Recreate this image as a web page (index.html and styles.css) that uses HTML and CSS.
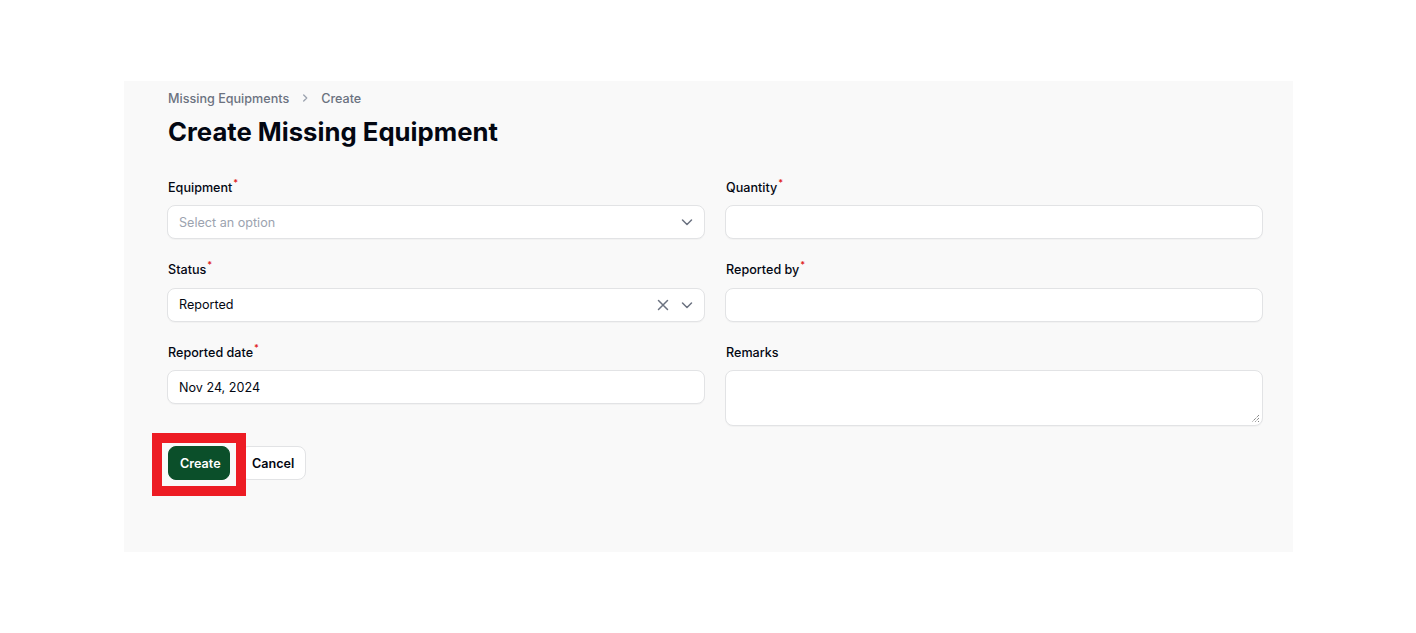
FILE: index.html
```html
<!DOCTYPE html>
<html>
<head>
<meta charset="utf-8">
<link rel="stylesheet" href="styles.css">
</head>
<body>
<div class="page">
  <div class="panel">
    <nav class="crumbs">
      <span>Missing Equipments</span>
      <svg class="sep" width="14" height="14" viewBox="0 0 16 16"><path d="M6.5 4.5 10 8l-3.5 3.5" fill="none" stroke="#9ca3af" stroke-width="1.5" stroke-linecap="round" stroke-linejoin="round"/></svg>
      <span>Create</span>
    </nav>
    <h1 class="title">Create Missing Equipment</h1>
    <form class="grid">
      <div class="field">
        <label class="label">Equipment<sup class="req">*</sup></label>
        <div class="input select">
          <span class="placeholder">Select an option</span>
          <span class="icons">
            <svg width="12" height="12" viewBox="0 0 12 12"><path d="M1.5 4 6 8.5 10.5 4" fill="none" stroke="#6b7280" stroke-width="1.5" stroke-linecap="round" stroke-linejoin="round"/></svg>
          </span>
        </div>
      </div>
      <div class="field">
        <label class="label">Quantity<sup class="req">*</sup></label>
        <div class="input"></div>
      </div>
      <div class="field">
        <label class="label">Status<sup class="req">*</sup></label>
        <div class="input select">
          <span class="value">Reported</span>
          <span class="icons">
            <svg width="12" height="12" viewBox="0 0 12 12"><path d="M1.5 1.5l9 9M10.5 1.5l-9 9" fill="none" stroke="#6b7280" stroke-width="1.5" stroke-linecap="round"/></svg>
            <svg width="12" height="12" viewBox="0 0 12 12"><path d="M1.5 4 6 8.5 10.5 4" fill="none" stroke="#6b7280" stroke-width="1.5" stroke-linecap="round" stroke-linejoin="round"/></svg>
          </span>
        </div>
      </div>
      <div class="field">
        <label class="label">Reported by<sup class="req">*</sup></label>
        <div class="input"></div>
      </div>
      <div class="field">
        <label class="label">Reported date<sup class="req">*</sup></label>
        <div class="input"><span class="value">Nov 24, 2024</span></div>
      </div>
      <div class="field">
        <label class="label">Remarks</label>
        <div class="input textarea">
          <svg class="grip" width="10" height="10" viewBox="0 0 10 10"><path d="M9 2 2 9M9 5 5 9M9 8 8 9" stroke="#555" stroke-width="1" stroke-dasharray="1 1"/></svg>
        </div>
      </div>
    </form>
    <div class="actions">
      <div class="hl-wrap">
        <button class="btn primary" type="button">Create</button>
        <span class="highlight"></span>
      </div>
      <button class="btn secondary" type="button">Cancel</button>
    </div>
  </div>
</div>
</body>
</html>
```

FILE: styles.css
```css
* { box-sizing: border-box; }
html, body { margin: 0; padding: 0; background: #ffffff; }
body {
  font-family: Inter, "Noto Sans", sans-serif;
  color: #030712;
  width: 1416px;
  height: 633px;
}
.page {
  padding: 81px 0 0 124px;
}
.panel {
  width: 1169px;
  height: 471px;
  background: #f9f9f9;
  padding: 7px 30px 0 44px;
}
.crumbs {
  display: flex;
  align-items: center;
  gap: 9px;
  height: 20px;
  font-size: 12.6px;
  font-weight: 500;
  color: #6b7280;
}
.crumbs .sep { margin: 0; }
.title {
  margin: 8px 0 0;
  font-size: 25.7px;
  line-height: 32px;
  font-weight: 700;
  color: #030712;
}
.grid {
  margin-top: 28.5px;
  display: grid;
  grid-template-columns: 538px 538px;
  column-gap: 20px;
  row-gap: 20px;
  margin-left: -1px;
}
.field { display: flex; flex-direction: column; }
.label {
  font-size: 12.6px;
  line-height: 22.5px;
  height: 22.5px;
  font-weight: 500;
  color: #030712;
  margin: 0 0 6px 1px;
}
.req {
  color: #e02424;
  font-size: 9px;
  font-weight: 600;
  vertical-align: top;
  line-height: 12px;
  margin-left: 1px;
}
.input {
  height: 34px;
  background: #ffffff;
  border: 1px solid #e2e3e5;
  border-radius: 8px;
  display: flex;
  align-items: center;
  padding: 0 11px;
  font-size: 12.6px;
  box-shadow: 0 1px 1px rgba(0,0,0,0.03);
}
.select { justify-content: space-between; padding-right: 11px; }
.placeholder { color: #9ca3af; }
.value { color: #030712; }
.icons { display: flex; gap: 12px; align-items: center; }
.textarea {
  height: 56px;
  align-items: flex-end;
  justify-content: flex-end;
  padding: 0 2px 2px 0;
}
.actions {
  margin-top: 20px;
  display: flex;
  gap: 10px;
  align-items: center;
}
.hl-wrap { position: relative; display: flex; }
.btn {
  height: 34px;
  border-radius: 8px;
  font-family: Inter, "Noto Sans", sans-serif;
  font-size: 12.6px;
  font-weight: 600;
  padding: 0 11px;
  cursor: pointer;
}
.primary {
  width: 62px;
  background: #0b4f2a;
  color: #ffffff;
  border: 1px solid #0b4f2a;
}
.secondary {
  width: 66px;
  background: #ffffff;
  color: #030712;
  border: 1px solid #e2e3e5;
}
.highlight {
  position: absolute;
  left: -16px;
  top: -13px;
  width: 94px;
  height: 63px;
  border: 10px solid #ed1c24;
  pointer-events: none;
}
```
